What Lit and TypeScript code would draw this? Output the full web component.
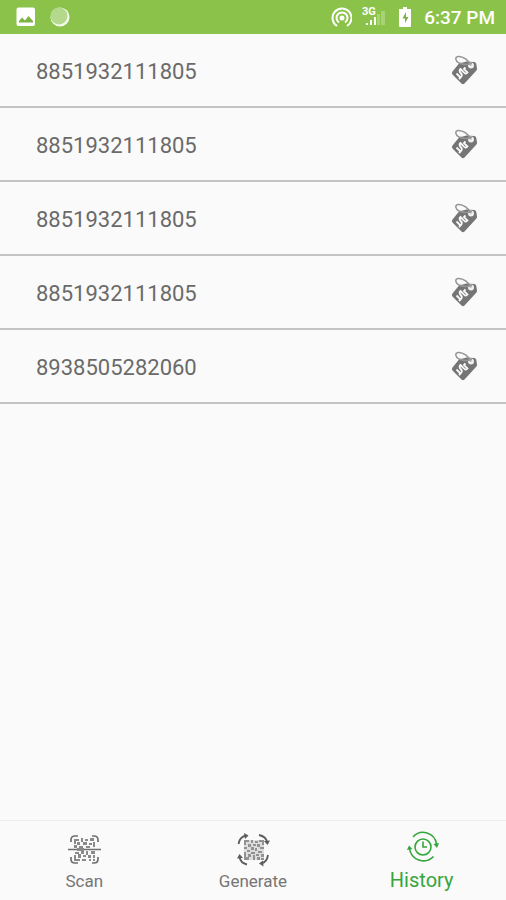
import { LitElement, html, svg, css } from "lit";
import { customElement, property } from "lit/decorators.js";

const GENERATE_CODE =
  "M0 0h5v2h-3v3h-2zM7 0h2v3h-2zM11 1h3v2h-3zM15 0h5v5h-2v-3h-3zM4 4h3v3h-3zM9 4h3v2h-3zM13 4h3v3h-3zM0 7h3v2h-3zM7 7h3v3h-3zM11 8h2v3h-2zM16 7h4v2h-4zM3 10h3v2h-3zM14 11h4v2h-4zM0 12h2v5h3v3h-5zM7 12h4v2h-4zM4 14h3v3h-3zM9 15h2v5h-2zM12 14h3v2h-3zM17 14h3v3h-3zM13 17h3v3h-3zM17 18h3v2h-3z";

@customElement("status-bar")
export class StatusBar extends LitElement {
  static styles = css`
    :host {
      display: flex;
      align-items: center;
      justify-content: space-between;
      height: 34px;
      padding: 0 11px 0 16px;
      background: #8bc34a;
      color: #fff;
    }
    .group {
      display: flex;
      align-items: center;
    }
    .left {
      gap: 14px;
    }
    .right {
      gap: 10px;
    }
    svg {
      display: block;
    }
    .time {
      font-size: 19px;
      line-height: 24px;
      font-weight: 500;
      padding-top: 2px;
    }
  `;

  render() {
    return html`
      <div class="group left">
        <svg width="20" height="20" viewBox="0 0 20 20" aria-hidden="true">
          <rect x="0.500" y="0.500" width="18.500" height="18.500" rx="2" fill="#fff" />
          <path d="M3 15.500V14L6 10.500L9 13.500L12.500 9L17 14V15.500Z" fill="#7cb342" />
        </svg>
        <svg width="20" height="20" viewBox="0 0 20 20" aria-hidden="true">
          <circle cx="10" cy="10" r="9.500" fill="#f4faec" />
          <circle cx="9" cy="9" r="8.500" fill="#b4d88c" />
        </svg>
      </div>
      <div class="group right">
        <svg width="22" height="22" viewBox="0 0 22 22" fill="none" stroke="#fff" stroke-width="2" aria-hidden="true">
          <path d="M7 20A9.500 9.500 0 1 1 17 20" />
          <path d="M9 16.500A5.500 5.500 0 1 1 15 16.500" />
          <circle cx="12" cy="12" r="1.500" fill="#fff" />
        </svg>
        <svg width="24" height="22" viewBox="0 0 24 22" aria-hidden="true">
          <text x="0" y="9" font-size="11" font-weight="700" fill="#fff">3G</text>
          <path d="M4 17h2v2h-2zM8 14h2v5h-2zM12 11h2v8h-2z" fill="#fff" />
          <path d="M15 8h3v11h-3zM19 5h4v14h-4z" fill="#a8d277" />
        </svg>
        <svg width="18" height="22" viewBox="0 0 18 22" aria-hidden="true">
          <path d="M6 1h4v2h4v17q0 1-1 1h-10q-1 0-1-1v-17h4z" fill="#fff" transform="translate(1 0)" />
          <path d="M10 6L6.500 12.500H9V17L12.500 11H10Z" fill="#7cb342" />
        </svg>
        <span class="time">6:37 PM</span>
      </div>
    `;
  }
}

@customElement("history-list")
export class HistoryList extends LitElement {
  @property({ attribute: false }) codes: string[] = [];

  static styles = css`
    ul {
      list-style: none;
      margin: 0;
      padding: 0;
    }
    .row {
      display: flex;
      align-items: center;
      justify-content: space-between;
      box-sizing: border-box;
      height: 74px;
      padding: 0 28px 0 36px;
      border-bottom: 2px solid #c4c4c4;
    }
    .code {
      font-size: 22px;
      line-height: 32px;
      color: #6a6a6a;
      padding-top: 4px;
    }
    svg {
      display: block;
    }
  `;

  render() {
    return html`
      <ul>
        ${this.codes.map(
          (code) => html`
            <li class="row">
              <span class="code">${code}</span>
              <svg width="28" height="32" viewBox="0 0 28 32" aria-hidden="true">
                <path
                  d="M16.500 7.500L24.500 8Q26 8.300 26.300 10L27 14.500Q27.200 15.800 26.200 16.800L14.500 29.500Q13 30.800 11.500 29.500L2.500 20.500Q1.200 19 2.500 17.500L9 9.500Z"
                  fill="#757575"
                />
                <circle cx="21" cy="11.500" r="3" fill="#f0f0f0" />
                <path d="M21 11.500C19 6.500 13 2 8 2.500C4.500 3 5.500 7.500 9 9C13 10.500 18 11 22 9.500" fill="none" stroke="#949494" stroke-width="1.500" />
                <path d="M6.500 19.500L10.500 23.500Q13 21.500 11 19.500Q8.500 17 10.500 15L13 17.500M10.500 23.500L9 25M13 17.500Q15.500 21 17.500 18.500L14 15L15.500 13.500" fill="none" stroke="#fafafa" stroke-width="1.800" />
              </svg>
            </li>
          `
        )}
      </ul>
    `;
  }
}

@customElement("bottom-nav")
export class BottomNav extends LitElement {
  static styles = css`
    nav {
      display: grid;
      grid-template-columns: repeat(3, 1fr);
      border-top: 1px solid #eee;
    }
    button {
      display: flex;
      flex-direction: column;
      align-items: center;
      gap: 2px;
      height: 79px;
      padding: 12px 0 0;
      border: 0;
      background: none;
      font-family: inherit;
      font-size: 17px;
      line-height: 24px;
      color: #757575;
    }
    .active {
      gap: 4px;
      padding-top: 9px;
      font-size: 20px;
      color: #35a63c;
    }
    svg {
      display: block;
    }
  `;

  scanIcon() {
    return svg`
      <g fill="none" stroke="#707070" stroke-width="1.700">
        <path d="M4 9V7Q4 3 8 3H11M25 3H27Q31 3 31 7V9M31 24V26Q31 30 27 30H25M11 30H8Q4 30 4 26V24" />
        <path d="M1 16.500H34" stroke-width="1.500" />
      </g>
      <path d="M7 6h5v2h-3v3h-2zM14 5h2v4h-2zM18 6h3v2h-3zM23 5h4v3h-4zM10 9h3v3h-3zM16 9h4v3h-4zM22 10h3v2h-3zM26 9h2v5h-2zM7 12h3v3h-3zM12 13h4v2h-4zM19 13h4v2h-4zM10 15h7v3h-7zM8 19h4v2h-4zM14 18h3v3h-3zM19 18h2v4h-2zM24 18h4v3h-4zM7 22h2v4h4v2h-6zM11 21h3v4h-3zM16 22h3v2h-3zM21 22h3v3h-3zM26 22h2v3h-2zM15 26h4v2h-4zM22 26h2v2h-2zM26 26h2v2h-2z" fill="#8a8a8a" />
    `;
  }

  generateIcon() {
    return svg`
      <path transform="translate(8 7)" d="M0 0H20V20H0Z" fill="#ddd" />
      <path transform="translate(8 7)" d="${GENERATE_CODE}" fill="#929292" />
      <g fill="none" stroke="#5c5c5c" stroke-width="1.800">
        <path d="M2.500 11Q3.500 4 10 2.500M23 2Q30 3.500 31 9M32 22Q31 29 25.500 30.500M11 31.500Q4.500 30 3.500 24" />
      </g>
      <path d="M8 0L12.500 2.500L9 6ZM28 8L34 7.500L31.500 12ZM27 27.500L23 30.500L27.500 33.500ZM1 25.500L3.500 21L7 25Z" fill="#5c5c5c" />
    `;
  }

  historyIcon() {
    return svg`
      <g fill="none" stroke="#35a63c" stroke-width="1.600">
        <circle cx="18" cy="17" r="8" />
        <path d="M18 11.500V17H22" />
        <path d="M8 7A13.500 13.500 0 0 1 31.500 14" />
        <path d="M28.500 26.500A14 14 0 0 1 4.500 18" />
      </g>
      <path d="M28.500 14L34 13L32 18ZM2 20L4 15.500L7.500 19Z" fill="#35a63c" />
    `;
  }

  render() {
    return html`
      <nav>
        <button type="button">
          <svg width="34" height="34" viewBox="0 0 34 34" aria-hidden="true">${this.scanIcon()}</svg>
          <span>Scan</span>
        </button>
        <button type="button">
          <svg width="34" height="34" viewBox="0 0 34 34" aria-hidden="true">${this.generateIcon()}</svg>
          <span>Generate</span>
        </button>
        <button type="button" class="active" aria-current="page">
          <svg width="34" height="34" viewBox="0 0 34 34" aria-hidden="true">${this.historyIcon()}</svg>
          <span>History</span>
        </button>
      </nav>
    `;
  }
}

@customElement("app-root")
export class AppRoot extends LitElement {
  private codes = [
    "8851932111805",
    "8851932111805",
    "8851932111805",
    "8851932111805",
    "8938505282060",
  ];

  static styles = css`
    :host {
      display: flex;
      flex-direction: column;
      min-height: 100vh;
      background: #fafafa;
      font-family: Roboto, "Noto Sans", sans-serif;
    }
    main {
      flex: 1;
    }
  `;

  render() {
    return html`
      <status-bar></status-bar>
      <main><history-list .codes=${this.codes}></history-list></main>
      <bottom-nav></bottom-nav>
    `;
  }
}
